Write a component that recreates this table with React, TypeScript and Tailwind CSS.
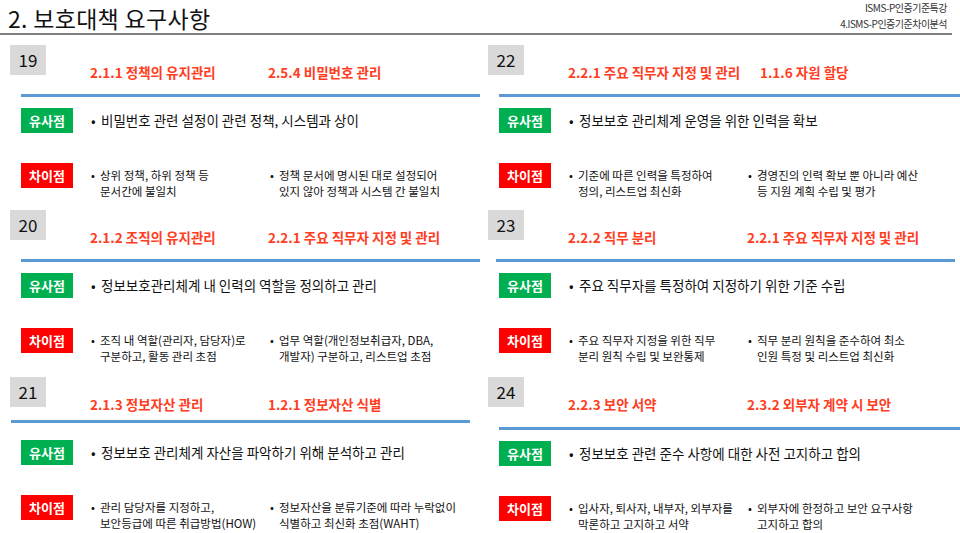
import React from 'react';

type Card = {
  n: string;
  h1: string;
  h2: string;
  sim: string;
  d1: string[];
  d2: string[];
  h2x: string;
  lineCls: string;
};

const left: Card[] = [
  {
    n: '19', h1: '2.1.1 정책의 유지관리', h2: '2.5.4 비밀번호 관리',
    sim: '비밀번호 관련 설정이 관련 정책, 시스템과 상이',
    d1: ['상위 정책, 하위 정책 등', '문서간에 불일치'],
    d2: ['정책 문서에 명시된 대로 설정되어', '있지 않아 정책과 시스템 간 불일치'],
    h2x: 'w-[178px]', lineCls: 'mt-[3px] ml-[21px] w-[459px]',
  },
  {
    n: '20', h1: '2.1.2 조직의 유지관리', h2: '2.2.1 주요 직무자 지정 및 관리',
    sim: '정보보호관리체계 내 인력의 역할을 정의하고 관리',
    d1: ['조직 내 역할(관리자, 담당자)로', '구분하고, 활동 관리 초점'],
    d2: ['업무 역할(개인정보취급자, DBA,', '개발자) 구분하고, 리스트업 초점'],
    h2x: 'w-[178px]', lineCls: 'mt-[3px] ml-[21px] w-[459px]',
  },
  {
    n: '21', h1: '2.1.3 정보자산 관리', h2: '1.2.1 정보자산 식별',
    sim: '정보보호 관리체계 자산을 파악하기 위해 분석하고 관리',
    d1: ['관리 담당자를 지정하고,', '보안등급에 따른 취급방법(HOW)'],
    d2: ['정보자산을 분류기준에 따라 누락없이', '식별하고 최신화 초점(WAHT)'],
    h2x: 'w-[178px]', lineCls: 'mt-[-3px] mb-[6px] ml-[11px] w-[459px]',
  },
];

const right: Card[] = [
  {
    n: '22', h1: '2.2.1 주요 직무자 지정 및 관리', h2: '1.1.6 자원 할당',
    sim: '정보보호 관리체계 운영을 위한 인력을 확보',
    d1: ['기준에 따른 인력을 특정하여', '정의, 리스트업 최신화'],
    d2: ['경영진의 인력 확보 뿐 아니라 예산', '등 지원 계획 수립 및 평가'],
    h2x: 'w-[192px]', lineCls: 'mt-[3px] ml-[21px] w-[461px]',
  },
  {
    n: '23', h1: '2.2.2 직무 분리', h2: '2.2.1 주요 직무자 지정 및 관리',
    sim: '주요 직무자를 특정하여 지정하기 위한 기준 수립',
    d1: ['주요 직무자 지정을 위한 직무', '분리 원칙 수립 및 보완통제'],
    d2: ['직무 분리 원칙을 준수하여 최소', '인원 특정 및 리스트업 최신화'],
    h2x: 'w-[179px]', lineCls: 'mt-[3px] ml-[18px] w-[459px]',
  },
  {
    n: '24', h1: '2.2.3 보안 서약', h2: '2.3.2 외부자 계약 시 보안',
    sim: '정보보호 관련 준수 사항에 대한 사전 고지하고 합의',
    d1: ['입사자, 퇴사자, 내부자, 외부자를', '막론하고 고지하고 서약'],
    d2: ['외부자에 한정하고 보안 요구사항', '고지하고 합의'],
    h2x: 'w-[179px]', lineCls: 'mt-[4px] ml-[21px] w-[461px]',
  },
];

function DiffCol({ lines, w }: { lines: string[]; w: string }) {
  return (
    <div className={`flex ${w} shrink-0 text-[11.5px] leading-[16px] text-[#111] whitespace-nowrap`}>
      <span className="w-[9px] shrink-0">•</span>
      <div>
        {lines.map((l, i) => (
          <div key={i}>{l}</div>
        ))}
      </div>
    </div>
  );
}

function CardView({ c, h }: { c: Card; h: string }) {
  return (
    <div className={`${h} flex flex-col`}>
      <div className="h-[46px] flex items-start">
        <div className="ml-[10px] w-[36px] h-[30px] bg-[#d9d9d9] flex items-center justify-center text-[17px] text-[#111]">
          {c.n}
        </div>
        <div className="ml-[44px] mt-[18px] flex text-[13.5px] font-bold leading-[18px] text-[#ff3d1f] whitespace-nowrap">
          <span className={`${c.h2x} shrink-0`}>{c.h1}</span>
          <span>{c.h2}</span>
        </div>
      </div>
      <div className={`${c.lineCls} h-[3px] bg-[#5b9bd5]`} />
      <div className="mt-[11px] ml-[21px] flex items-center h-[25px]">
        <div className="w-[52px] h-[25px] bg-[#00b050] text-white text-[13px] font-bold flex items-center justify-center">
          유사점
        </div>
        <div className="ml-[18px] flex text-[13.5px] text-[#111] whitespace-nowrap">
          <span className="w-[10px]">•</span>
          <span>{c.sim}</span>
        </div>
      </div>
      <div className="mt-[30px] ml-[21px] flex items-start">
        <div className="w-[52px] h-[25px] bg-[#ff0000] text-white text-[13px] font-bold flex items-center justify-center shrink-0">
          차이점
        </div>
        <div className="ml-[18px] mt-[4px] flex">
          <DiffCol lines={c.d1} w="w-[179px]" />
          <DiffCol lines={c.d2} w="w-[200px]" />
        </div>
      </div>
    </div>
  );
}

export default function App() {
  return (
    <div className="w-[960px] h-[533px] bg-white overflow-hidden font-['Noto_Sans_CJK_KR','Noto_Sans',sans-serif]">
      <div className="h-[33px] flex justify-between items-start w-[952px]">
        <div className="pl-[8px] pt-[5px] text-[23px] leading-[27px] tracking-[0.3px] text-[#111]">2. 보호대책 요구사항</div>
        <div className="pr-[5px] pt-[0px] flex flex-col items-end text-[10px] leading-[16px] tracking-[-0.5px] text-[#333]">
          <div>ISMS-P인증기준특강</div>
          <div>4.ISMS-P인증기준차이분석</div>
        </div>
      </div>
      <div className="h-[2px] w-[952px] bg-[#7f7f7f]" />
      <div className="mt-[10px] grid grid-cols-[478px_482px]">
        <div className="flex flex-col">
          <CardView c={left[0]} h="h-[165px]" />
          <CardView c={left[1]} h="h-[167px]" />
          <CardView c={left[2]} h="h-[156px]" />
        </div>
        <div className="flex flex-col">
          <CardView c={right[0]} h="h-[165px]" />
          <CardView c={right[1]} h="h-[167px]" />
          <CardView c={right[2]} h="h-[156px]" />
        </div>
      </div>
    </div>
  );
}
